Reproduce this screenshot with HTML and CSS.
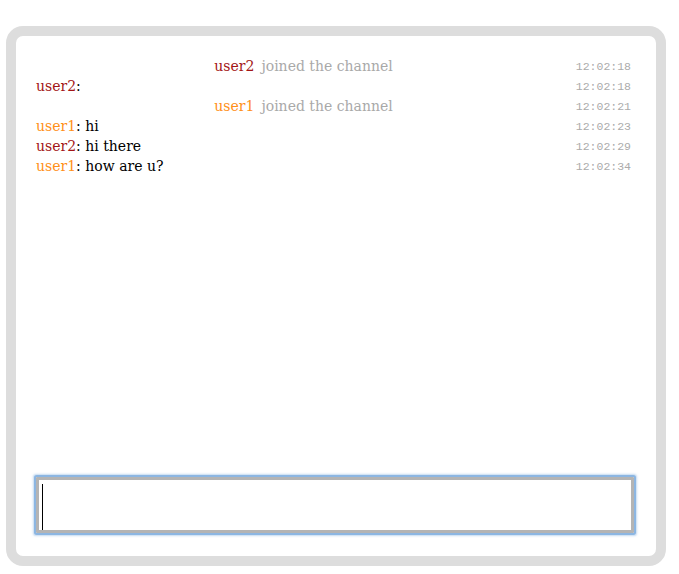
FILE: index.html
```html
<!DOCTYPE html>
<html>
<head>
<meta charset="utf-8">
<link rel="stylesheet" href="styles.css">
</head>
<body>
<div class="chat">
  <div class="log">
    <div class="row">
      <div class="msg join"><span class="nick u2">user2</span><span class="jtext">joined the channel</span></div>
      <div class="time">12:02:18</div>
    </div>
    <div class="row">
      <div class="msg"><span class="nick u2">user2</span>:</div>
      <div class="time">12:02:18</div>
    </div>
    <div class="row">
      <div class="msg join"><span class="nick u1">user1</span><span class="jtext">joined the channel</span></div>
      <div class="time">12:02:21</div>
    </div>
    <div class="row">
      <div class="msg"><span class="nick u1">user1</span>: hi</div>
      <div class="time">12:02:23</div>
    </div>
    <div class="row">
      <div class="msg"><span class="nick u2">user2</span>: hi there</div>
      <div class="time">12:02:29</div>
    </div>
    <div class="row">
      <div class="msg"><span class="nick u1">user1</span>: how are u?</div>
      <div class="time">12:02:34</div>
    </div>
  </div>
  <div class="input"><span class="caret"></span></div>
</div>
</body>
</html>
```
FILE: styles.css
```css
html, body {
  margin: 0;
  padding: 0;
  background: #fff;
}
body {
  padding: 26px 0 0 6px;
}
.chat {
  box-sizing: border-box;
  width: 660px;
  height: 540px;
  border: 10px solid #dddddd;
  border-radius: 17px;
  padding: 20px 22px 23px 20px;
  display: flex;
  flex-direction: column;
  font-family: "DejaVu Serif", serif;
  font-size: 14px;
  color: #000;
}
.log {
  flex: 1;
}
.row {
  display: flex;
  align-items: center;
  height: 20px;
}
.msg {
  flex: 1;
  line-height: 20px;
  white-space: nowrap;
}
.join {
  text-align: center;
}
.jtext {
  color: #a9a9a9;
  margin-left: 7px;
}
.nick.u2 { color: #a31616; }
.nick.u1 { color: #ff9019; }
.time {
  width: 60px;
  padding-right: 3px;
  text-align: right;
  font-family: "Liberation Mono", monospace;
  font-size: 11.5px;
  color: #ababab;
}
.input {
  box-sizing: border-box;
  height: 56px;
  border: 3px solid #b4b4b4;
  border-radius: 1px;
  box-shadow: 0 0 0 2px #8cb6e2, 0 0 2px 3px rgba(140, 182, 226, 0.5);
  padding: 4px 0 0 3px;
}
.caret {
  display: block;
  width: 1px;
  height: 46px;
  background: #000;
}
```
